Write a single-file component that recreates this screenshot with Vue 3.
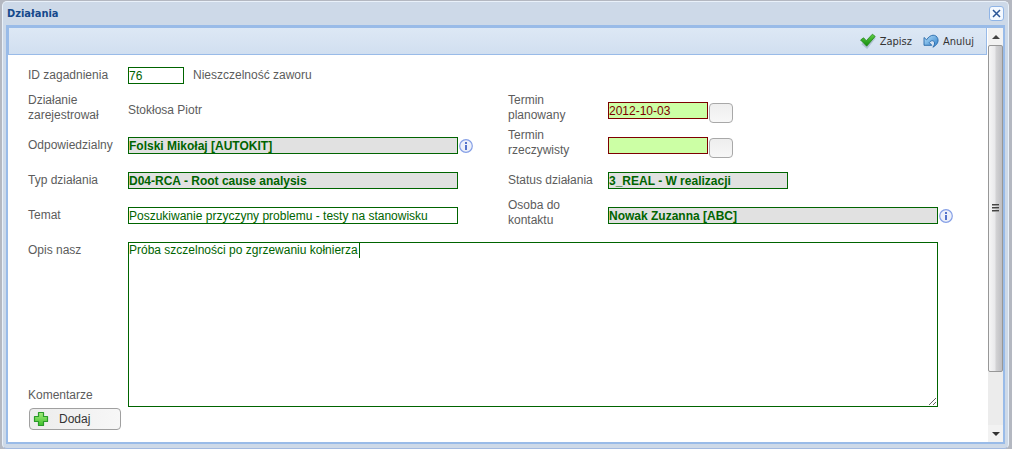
<script setup>
import { ref } from 'vue'

const issueId = ref('76')
const responsible = ref('Folski Mikołaj [AUTOKIT]')
const actionType = ref('D04-RCA - Root cause analysis')
const subject = ref('Poszukiwanie przyczyny problemu - testy na stanowisku')
const plannedDate = ref('2012-10-03')
const actualDate = ref('')
const status = ref('3_REAL - W realizacji')
const contact = ref('Nowak Zuzanna [ABC]')
const description = ref('Próba szczelności po zgrzewaniu kołnierza')
</script>

<template>
  <div class="page">
    <section class="window" aria-labelledby="window-title">
      <header class="titlebar">
        <h1 id="window-title">Działania</h1>
        <button class="close" type="button" aria-label="Zamknij">
          <svg width="9" height="9" viewBox="0 0 9 9"><path d="M1 1L8 8M8 1L1 8" stroke="#2a5596" stroke-width="1.5" /></svg>
        </button>
      </header>

      <div class="frame">
        <main class="content">
          <div class="toolbar">
            <button class="tool" type="button">
              <svg width="16" height="16" viewBox="0 0 16 16">
                <defs>
                  <linearGradient id="tick" x1="0" y1="0" x2="0" y2="1">
                    <stop offset="0" stop-color="#5fd044" /><stop offset="1" stop-color="#128a0c" />
                  </linearGradient>
                </defs>
                <path d="M2 10.5L7 14.5L15 4.5" fill="none" stroke="#8aa0b4" stroke-opacity=".5" stroke-width="2" />
                <path d="M.6 7L3.6 4.8L6.3 7.7L12.4 1.2L15.2 3.4L6.7 13.2Z" fill="url(#tick)" stroke="#23851c" stroke-width=".8" stroke-linejoin="round" />
              </svg>
              <span>Zapisz</span>
            </button>
            <button class="tool" type="button">
              <svg width="16" height="16" viewBox="0 0 16 16">
                <defs>
                  <linearGradient id="undo" x1="0" y1="0" x2="1" y2="1">
                    <stop offset="0" stop-color="#b9e2fb" /><stop offset="1" stop-color="#2a7cc9" />
                  </linearGradient>
                </defs>
                <path d="M1 4.5L1 12.3L8.8 12.3L6.3 9.6C8 7.3 10.2 7.2 11.2 8.8C12 10.2 11.5 12 9.9 14.2C14 12.2 15.8 8.7 14.8 5.6C13.2 1.1 7.5 .7 3.6 6.8Z" fill="url(#undo)" stroke="#2668a8" stroke-width=".9" stroke-linejoin="round" />
              </svg>
              <span>Anuluj</span>
            </button>
          </div>

          <form class="form" @submit.prevent>
            <div class="grid">
              <label for="issue">ID zagadnienia</label>
              <div class="cell wide">
                <input id="issue" v-model="issueId" class="field id" type="text" />
                <span>Nieszczelność zaworu</span>
              </div>

              <span class="label double">Działanie zarejestrował</span>
              <div class="cell">Stokłosa Piotr</div>
              <label class="double" for="planned">Termin planowany</label>
              <div class="cell">
                <input id="planned" v-model="plannedDate" class="field date" type="text" />
                <button class="pick" type="button" aria-label="Wybierz termin planowany"></button>
              </div>

              <label for="responsible">Odpowiedzialny</label>
              <div class="cell">
                <input id="responsible" v-model="responsible" class="field long locked" type="text" readonly />
                <button class="info" type="button" aria-label="Informacje o osobie odpowiedzialnej">
                  <svg width="14" height="14" viewBox="0 0 14 14">
                    <circle cx="7" cy="7" r="6.3" fill="#eef1fa" stroke="#86a0e6" stroke-width="1.2" />
                    <path d="M6 3h2v2H6zM6 6h2v5H6z" fill="#5574cc" />
                  </svg>
                </button>
              </div>
              <label class="double" for="actual">Termin rzeczywisty</label>
              <div class="cell">
                <input id="actual" v-model="actualDate" class="field date" type="text" />
                <button class="pick" type="button" aria-label="Wybierz termin rzeczywisty"></button>
              </div>

              <label for="type">Typ działania</label>
              <div class="cell">
                <input id="type" v-model="actionType" class="field long locked" type="text" readonly />
              </div>
              <label for="status">Status działania</label>
              <div class="cell">
                <input id="status" v-model="status" class="field status locked" type="text" readonly />
              </div>

              <label for="subject">Temat</label>
              <div class="cell">
                <input id="subject" v-model="subject" class="field long" type="text" />
              </div>
              <label class="double" for="contact">Osoba do kontaktu</label>
              <div class="cell">
                <input id="contact" v-model="contact" class="field long locked" type="text" readonly />
                <button class="info" type="button" aria-label="Informacje o osobie do kontaktu">
                  <svg width="14" height="14" viewBox="0 0 14 14">
                    <circle cx="7" cy="7" r="6.3" fill="#eef1fa" stroke="#86a0e6" stroke-width="1.2" />
                    <path d="M6 3h2v2H6zM6 6h2v5H6z" fill="#5574cc" />
                  </svg>
                </button>
              </div>
            </div>

            <div class="notes">
              <div class="side">
                <label for="description">Opis nasz</label>
                <span>Komentarze</span>
              </div>
              <div class="area">
                <textarea id="description" v-model="description" spellcheck="false"></textarea>
                <i class="caret"></i>
              </div>
            </div>

            <button class="add" type="button">
              <svg width="16" height="16" viewBox="0 0 16 16">
                <defs>
                  <linearGradient id="plus" x1="0" y1="0" x2="0" y2="1">
                    <stop offset="0" stop-color="#a4ec7c" /><stop offset="1" stop-color="#3fbf2c" />
                  </linearGradient>
                </defs>
                <path d="M5.5 1.5h5v4h4v5h-4v4h-5v-4h-4v-5h4z" fill="url(#plus)" stroke="#2a9a2a" stroke-width="1.2" stroke-linejoin="round" />
              </svg>
              <span>Dodaj</span>
            </button>
          </form>
        </main>

        <div class="scrollbar" aria-hidden="true">
          <div class="arrow"><svg width="8" height="4" viewBox="0 0 8 4"><path d="M0 4L4 0L8 4z" fill="#444" /></svg></div>
          <div class="track">
            <div class="thumb"><i></i><i></i><i></i></div>
          </div>
          <div class="arrow"><svg width="8" height="4" viewBox="0 0 8 4"><path d="M0 0L4 4L8 0z" fill="#333" /></svg></div>
        </div>
      </div>
    </section>
  </div>
</template>

<style>
body {
  background: #b4b8c1;
}
</style>

<style scoped>
* {
  box-sizing: border-box;
}

.page {
  display: flex;
  min-height: 100vh;
  padding: 1px 3px 2px 2px;
  color: #5c5c5c;
  font: 12px/15px "Liberation Sans", Arial, sans-serif;
}

button {
  margin: 0;
  padding: 0;
  border: 0;
  background: none;
  color: #333;
  font: inherit;
}

.window {
  display: flex;
  flex: 1;
  flex-direction: column;
  padding: 0 3px 4px;
  border: 1px solid #e9f1fa;
  border-bottom-color: #a3bae0;
  border-radius: 5px;
  background: #cdd9e8;
}

.titlebar {
  display: flex;
  align-items: center;
  justify-content: space-between;
  height: 23px;
  padding: 0 1px;
}

h1 {
  margin: 0;
  color: #15498b;
  font: bold 11px/15px "DejaVu Sans Condensed", "DejaVu Sans", Tahoma, sans-serif;
}

.close {
  display: flex;
  align-items: center;
  justify-content: center;
  width: 15px;
  height: 15px;
  border: 1px solid #8fb4e6;
  border-radius: 3px;
  background: #f4f9ff;
}

.frame {
  display: flex;
  flex: 1;
  border: 2px solid #99bbe8;
  border-top-width: 3px;
}

.content {
  flex: 1;
  min-width: 0;
  background: #fff;
}

.toolbar {
  display: flex;
  align-items: center;
  justify-content: flex-end;
  gap: 11px;
  height: 27px;
  margin-right: 1px;
  padding-right: 12px;
  border: solid #99bbe8;
  border-width: 0 1px 1px;
  background: linear-gradient(#dde8f5, #d1dff0);
}

.tool {
  display: flex;
  align-items: center;
  gap: 4px;
  font: 11px/15px "DejaVu Sans Condensed", "DejaVu Sans", Tahoma, sans-serif;
}

.form {
  padding: 3px 0 12px 20px;
}

.grid {
  display: grid;
  grid-template-columns: 100px minmax(0, 1fr) 100px minmax(0, 1fr);
  grid-auto-rows: 35px;
  align-items: center;
}

.double {
  align-self: start;
  width: 88px;
}

label[for="planned"],
label[for="actual"],
label[for="contact"] {
  width: 70px;
}

.cell {
  display: flex;
  align-items: center;
}

.wide {
  grid-column: span 3;
  gap: 9px;
}

.field {
  height: 17px;
  padding: 0;
  border: 1px solid #006400;
  border-radius: 0;
  outline: 0;
  background: #fff;
  color: #006400;
  font: inherit;
}

.id {
  width: 56px;
}

.long {
  width: calc(100% - 50px);
}

.status {
  width: 180px;
}

.date {
  width: 100px;
  border-color: #7d0000;
  background: #ccffa5;
  color: #7d0000;
}

.locked {
  background: #e1e1e1;
  font-weight: bold;
}

.pick {
  width: 24px;
  height: 20px;
  margin: 4px 0 0 1px;
  border: 1px solid #a8a8a8;
  border-radius: 4px;
  background: linear-gradient(#eee, #f7f7f7);
}

.info {
  display: flex;
  margin-left: 1px;
}

.notes {
  display: flex;
  padding: 9px 50px 0 0;
}

.side {
  display: flex;
  flex: 0 0 100px;
  flex-direction: column;
  justify-content: space-between;
  padding: 1px 0 4px;
}

.area {
  position: relative;
  flex: 1;
}

textarea {
  display: block;
  width: 100%;
  height: 165px;
  padding: 0;
  border: 1px solid #006400;
  outline: 0;
  resize: vertical;
  background: #fff;
  color: #006400;
  font: inherit;
}

.caret {
  position: absolute;
  top: 1px;
  left: 231px;
  width: 1px;
  height: 15px;
  background: #006400;
}

.add {
  display: flex;
  align-items: center;
  gap: 10px;
  width: 92px;
  height: 22px;
  margin: 1px 0 0 1px;
  padding-left: 3px;
  border: 1px solid #a0a0a0;
  border-radius: 4px;
  background: linear-gradient(90deg, #ececec, #f7f7f7);
}

.scrollbar {
  display: flex;
  flex: 0 0 15px;
  flex-direction: column;
  background: #ececec;
}

.arrow {
  display: flex;
  align-items: center;
  justify-content: center;
  height: 17px;
  background: #f2f2f2;
}

.track {
  flex: 1;
}

.thumb {
  display: flex;
  flex-direction: column;
  align-items: center;
  justify-content: center;
  gap: 1px;
  height: 86%;
  border: 1px solid #979797;
  border-radius: 2px;
  background: linear-gradient(90deg, #f6f6f6, #e9e9eb 45%, #d2d2d4 55%, #bebec2);
}

.thumb i {
  width: 7px;
  height: 2px;
  border-top: 1px solid #444;
  background: #999;
}
</style>
